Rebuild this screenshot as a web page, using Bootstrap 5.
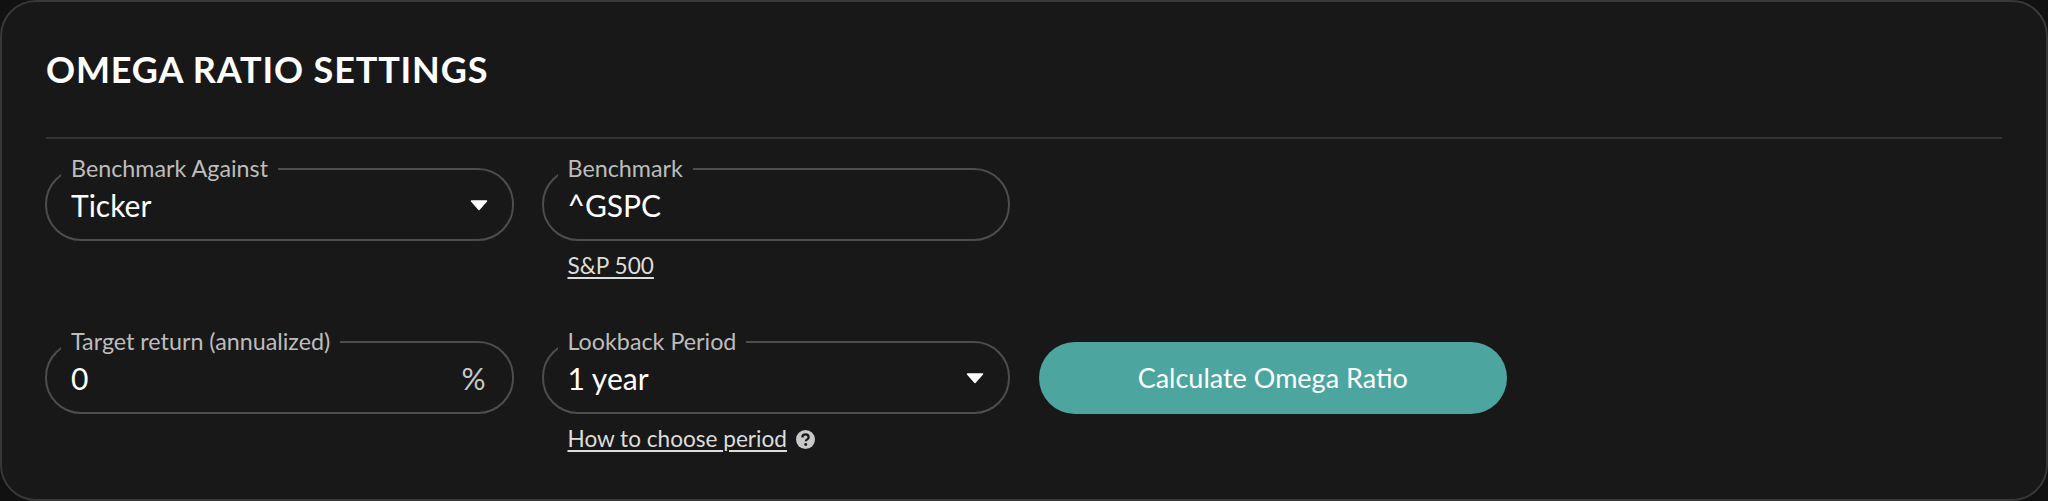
<!doctype html>
<html lang="en">
<head>
<meta charset="utf-8">
<title>Omega Ratio Settings</title>
<link href="https://cdn.jsdelivr.net/npm/bootstrap@5.3.0/dist/css/bootstrap.min.css" rel="stylesheet">
<style>
html, body { height: 100%; }
body { background: #111; font-family: Lato, "Noto Sans", sans-serif; overflow: hidden; }
.panel { height: 501px; background: #181818; border: 2px solid #383838; border-radius: 36px; color: #fff; padding: 0 44px; }
.panel-title { font-size: 36px; font-weight: 700; line-height: 44px; margin: 45px 0 0; color: #fff; letter-spacing: .85px; }
.panel-rule { margin: 46px 0 0; border: 0; border-top: 2px solid #333; opacity: 1; }
.field-row { display: flex; gap: 29px; align-items: flex-start; }
.row-one { margin-top: 15px; height: 173px; }
.field-col { width: 467.5px; flex: none; }
.out-field { margin: 0 0 0 -1px; padding: 0 24px 0 24px; height: 87px; border: 2px solid #4d4d4d; border-radius: 36px; min-width: 0; display: flex; align-items: center; background: none; }
.out-field legend { float: none; width: auto; margin: 0 0 0 -10px; padding: 0 10px 2px; font-size: 23.3px; line-height: 28px; color: #bdbdbd; white-space: nowrap; }
.out-field .form-control, .out-field .form-select { background-color: transparent; border: 0; box-shadow: none; border-radius: 0; color: #fff; font-size: 30px; line-height: 38px; padding: 0; height: 38px; margin-top: -13px; font-family: inherit; }
.out-field .form-select { background-image: url("data:image/svg+xml,%3Csvg xmlns='http://www.w3.org/2000/svg' viewBox='0 0 18 11'%3E%3Cpath fill='%23fff' stroke='%23fff' stroke-width='1.5' stroke-linejoin='round' d='M1.5 1h15L9 9.5z'/%3E%3C/svg%3E"); background-size: 18px 11px; background-position: right 0 center; }
.out-field .form-select option { background: #181818; }
.unit-sign { font-size: 30px; color: #c8c8c8; margin: -13px 2px 0 0; line-height: 38px; }
.field-note { display: flex; align-items: center; gap: 9px; margin: 11px 0 0 25px; font-size: 22.6px; line-height: 28px; }
.field-note a { color: #ddd; text-decoration: underline; text-underline-offset: 3px; }
.go-btn { width: 467.5px; height: 72px; margin-top: 15px; background: #4ca69f; border: 0; border-radius: 36px; color: #fff; font-size: 27px; flex: none; }
.go-btn:hover { background: #4ca69f; color: #fff; }
</style>
</head>
<body>
<div class="panel">
  <h2 class="panel-title text-uppercase">Omega Ratio Settings</h2>
  <hr class="panel-rule">
  <div class="field-row row-one">
    <div class="field-col">
      <fieldset class="out-field">
        <legend>Benchmark Against</legend>
        <select class="form-select" aria-label="Benchmark Against"><option>Ticker</option><option>Fund</option></select>
      </fieldset>
    </div>
    <div class="field-col">
      <fieldset class="out-field">
        <legend>Benchmark</legend>
        <input class="form-control" value="^GSPC" aria-label="Benchmark">
      </fieldset>
      <div class="field-note"><a href="#">S&amp;P 500</a></div>
    </div>
  </div>
  <div class="field-row">
    <div class="field-col">
      <fieldset class="out-field">
        <legend>Target return (annualized)</legend>
        <input class="form-control" value="0" aria-label="Target return">
        <span class="unit-sign">%</span>
      </fieldset>
    </div>
    <div class="field-col">
      <fieldset class="out-field">
        <legend>Lookback Period</legend>
        <select class="form-select" aria-label="Lookback Period"><option>1 year</option><option>3 years</option></select>
      </fieldset>
      <div class="field-note"><a href="#">How to choose period</a>
        <svg width="19" height="19" viewBox="0 0 17 17" aria-hidden="true"><circle cx="8.5" cy="8.5" r="8.5" fill="#c8c8c8"/><path d="M5.7 6.6c0-1.6 1.2-2.6 2.8-2.6s2.8.9 2.8 2.4c0 1-.6 1.6-1.3 2-.8.5-1.2.8-1.2 1.6" fill="none" stroke="#181818" stroke-width="2"/><circle cx="8.7" cy="13" r="1.3" fill="#181818"/></svg>
      </div>
    </div>
    <button type="button" class="btn go-btn">Calculate Omega Ratio</button>
  </div>
</div>
<script src="https://cdn.jsdelivr.net/npm/bootstrap@5.3.0/dist/js/bootstrap.bundle.min.js"></script>
</body>
</html>
